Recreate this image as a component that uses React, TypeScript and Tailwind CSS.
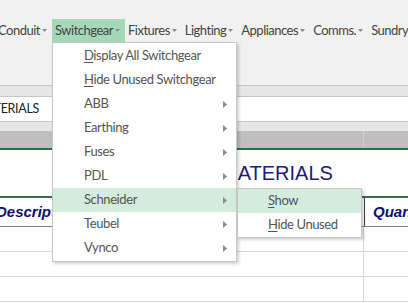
import React from 'react';

const ribbonItems = ['Conduit', 'Switchgear', 'Fixtures', 'Lighting', 'Appliances', 'Comms.', 'Sundry'];

const menuItems = [
  { label: 'Display All Switchgear', key: 'D', sub: false },
  { label: 'Hide Unused Switchgear', key: 'H', sub: false },
  { label: 'ABB', sub: true },
  { label: 'Earthing', sub: true },
  { label: 'Fuses', sub: true },
  { label: 'PDL', sub: true },
  { label: 'Schneider', sub: true, active: true },
  { label: 'Teubel', sub: true },
  { label: 'Vynco', sub: true },
];

const DownArrow = () => (
  <svg width="5" height="3" viewBox="0 0 5 3" className="shrink-0">
    <path d="M0 0h5L2.5 3z" fill="#8c8c8c" />
  </svg>
);

const RightArrow = () => (
  <svg width="4" height="7" viewBox="0 0 4 7" className="shrink-0">
    <path d="M0 0l4 3.5L0 7z" fill="#8a8a8a" />
  </svg>
);

// first letter gets the accelerator underline
const Accel = ({ text, accel }: { text: string; accel?: string }) => {
  if (!accel) return <>{text}</>;
  return (
    <>
      <span className="underline underline-offset-2">{text[0]}</span>
      {text.slice(1)}
    </>
  );
};

const App = () => {
  return (
    <div className="relative w-[408px] h-[303px] overflow-hidden bg-white font-['Lato',sans-serif]">
      {/* ribbon */}
      <div className="h-[86px] bg-[#f1f1f1] border-b border-[#c6c6c6] overflow-hidden">
        <div className="pt-[19px] flex -ml-[5px]">
          {ribbonItems.map((item) => (
            <div
              key={item}
              className={`flex shrink-0 items-center gap-[2px] h-[23px] pl-[3px] pr-[5px] text-[13px] tracking-[-0.5px] text-[#444] whitespace-nowrap ${
                item === 'Switchgear' ? 'bg-[#a4d8b9]' : ''
              }`}
            >
              <span>{item}</span>
              <DownArrow />
            </div>
          ))}
        </div>
      </div>

      <div className="h-[10px] bg-[#e6e6e6]" />

      {/* formula bar */}
      <div className="h-[26px] bg-white border-y border-[#c6c6c6] flex items-center overflow-hidden">
        <span className="shrink-0 -ml-[25px] text-[12.5px] tracking-[-0.3px] text-[#222] whitespace-nowrap">MATERIALS</span>
      </div>

      <div className="h-[9px] bg-[#e6e6e6]" />

      {/* column headers */}
      <div className="h-[17px] bg-[#bfbfbf] flex">
        <div className="w-[364px] shrink-0 border-r border-[#d0d0d0]" />
        <div className="flex-1" />
      </div>
      <div className="h-[2px] bg-[#217346]" />

      {/* title row */}
      <div className="h-[46px] pl-[221px] pt-[11px]">
        <span className="text-[20px] leading-[24px] text-[#1b1b78] font-['Liberation_Sans',sans-serif]">MATERIALS</span>
      </div>

      {/* header row */}
      <div className="h-[31px] flex border-t-2 border-[#3b6a4e] border-b border-b-[#808080] font-['Liberation_Sans',sans-serif] italic font-bold text-[15px] text-[#0d0d7a]">
        <div className="w-[364px] shrink-0 flex items-center overflow-hidden">
          <span className="-ml-[4px] whitespace-nowrap">Description</span>
        </div>
        <div className="flex-1 min-w-0 flex items-center pl-[8px] border-l border-[#404040] whitespace-nowrap overflow-hidden">
          Quantity
        </div>
      </div>

      {/* grid rows */}
      {[0, 1, 2].map((i) => (
        <div key={i} className="h-[25px] flex border-b border-[#d6d6d6]">
          <div className="w-[364px] shrink-0 border-r border-[#d6d6d6]" />
          <div className="flex-1" />
        </div>
      ))}

      {/* dropdown menu */}
      <div className="absolute left-[52px] top-[42px] w-[185px] bg-white border border-[#c6c6c6] shadow-[2px_2px_3px_rgba(0,0,0,0.18)] pt-[1px] pb-[1px]">
        {menuItems.map((m) => (
          <div
            key={m.label}
            className={`h-[24px] flex items-center justify-between pl-[31px] pr-[9px] text-[13px] tracking-[-0.4px] text-[#555] whitespace-nowrap ${
              m.active ? 'bg-[#d3ecde]' : ''
            }`}
          >
            <span>
              <Accel text={m.label} accel={m.key} />
            </span>
            {m.sub && <RightArrow />}
          </div>
        ))}
      </div>

      {/* submenu */}
      <div className="absolute left-[237px] top-[188px] w-[125px] bg-white border border-[#c6c6c6] shadow-[2px_2px_3px_rgba(0,0,0,0.18)] text-[13px] tracking-[-0.4px] text-[#555]">
        <div className="h-[24px] flex items-center pl-[30px] bg-[#d3ecde]">
          <span>
            <Accel text="Show" accel="S" />
          </span>
        </div>
        <div className="h-[24px] flex items-center pl-[30px]">
          <span>
            <Accel text="Hide Unused" accel="H" />
          </span>
        </div>
      </div>
    </div>
  );
};

export default App;
